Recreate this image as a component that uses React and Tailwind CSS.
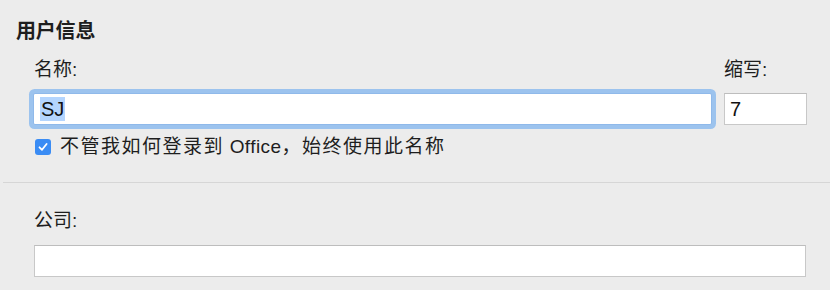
import React from "react";

const font = { fontFamily: '"Liberation Sans", "Noto Sans CJK SC", sans-serif' };

export default function App() {
  return (
    <div className="w-[830px] h-[290px] bg-[#ececec] text-[#1e1e1e] overflow-hidden" style={font}>
      <div className="pt-[19px] pl-[16px]">
        <div className="h-[24px] leading-[24px] text-[20px] font-bold tracking-[-0.2px]">用户信息</div>
      </div>
      <div className="pl-[33px] pr-[23px] mt-[15px]">
        <div className="flex gap-[12px]">
          <div className="flex-1 flex flex-col">
            <div className="h-[24px] leading-[24px] text-[19px] pl-[1px]">名称:</div>
            <div className="mt-[11px] h-[32px] bg-white border border-[#8fb9ea] rounded-[2px] shadow-[0_0_0_4px_#9cc3ee] flex items-center pl-[6px]">
              <span className="bg-[#b4d5fe] text-[20px] leading-[24px] px-[1px] text-[#111]">SJ</span>
            </div>
          </div>
          <div className="w-[83px] flex flex-col">
            <div className="h-[24px] leading-[24px] text-[19px]">缩写:</div>
            <div className="mt-[11px] h-[32px] bg-white border border-[#c8c8c8] border-t-[#bdbdbd] flex items-center pl-[5px]">
              <span className="text-[20px] leading-[24px] text-[#111]">7</span>
            </div>
          </div>
        </div>
        <div className="mt-[10px] h-[24px] flex items-center gap-[9px] pl-[2px]">
          <div className="w-[16px] h-[16px] rounded-[3px] bg-[#3a8cf4] flex items-center justify-center shrink-0">
            <svg width="12" height="12" viewBox="0 0 12 12" fill="none">
              <path d="M2.5 6.3 L5 8.8 L9.6 3" stroke="white" strokeWidth="1.8" strokeLinecap="round" strokeLinejoin="round" />
            </svg>
          </div>
          <span className="text-[19px] leading-[24px] tracking-[1.5px]">
            不管我如何登录到<span className="tracking-[0.4px]"> Office</span>，始终使用此名称
          </span>
        </div>
      </div>
      <div className="mt-[23px] ml-[3px] h-[1px] bg-[#d6d6d6]" />
      <div className="pl-[34px] pr-[24px] mt-[26px]">
        <div className="h-[24px] leading-[24px] text-[19px]">公司:</div>
        <div className="mt-[12px] h-[32px] bg-white border border-[#c8c8c8] border-t-[#bdbdbd]" />
      </div>
    </div>
  );
}
